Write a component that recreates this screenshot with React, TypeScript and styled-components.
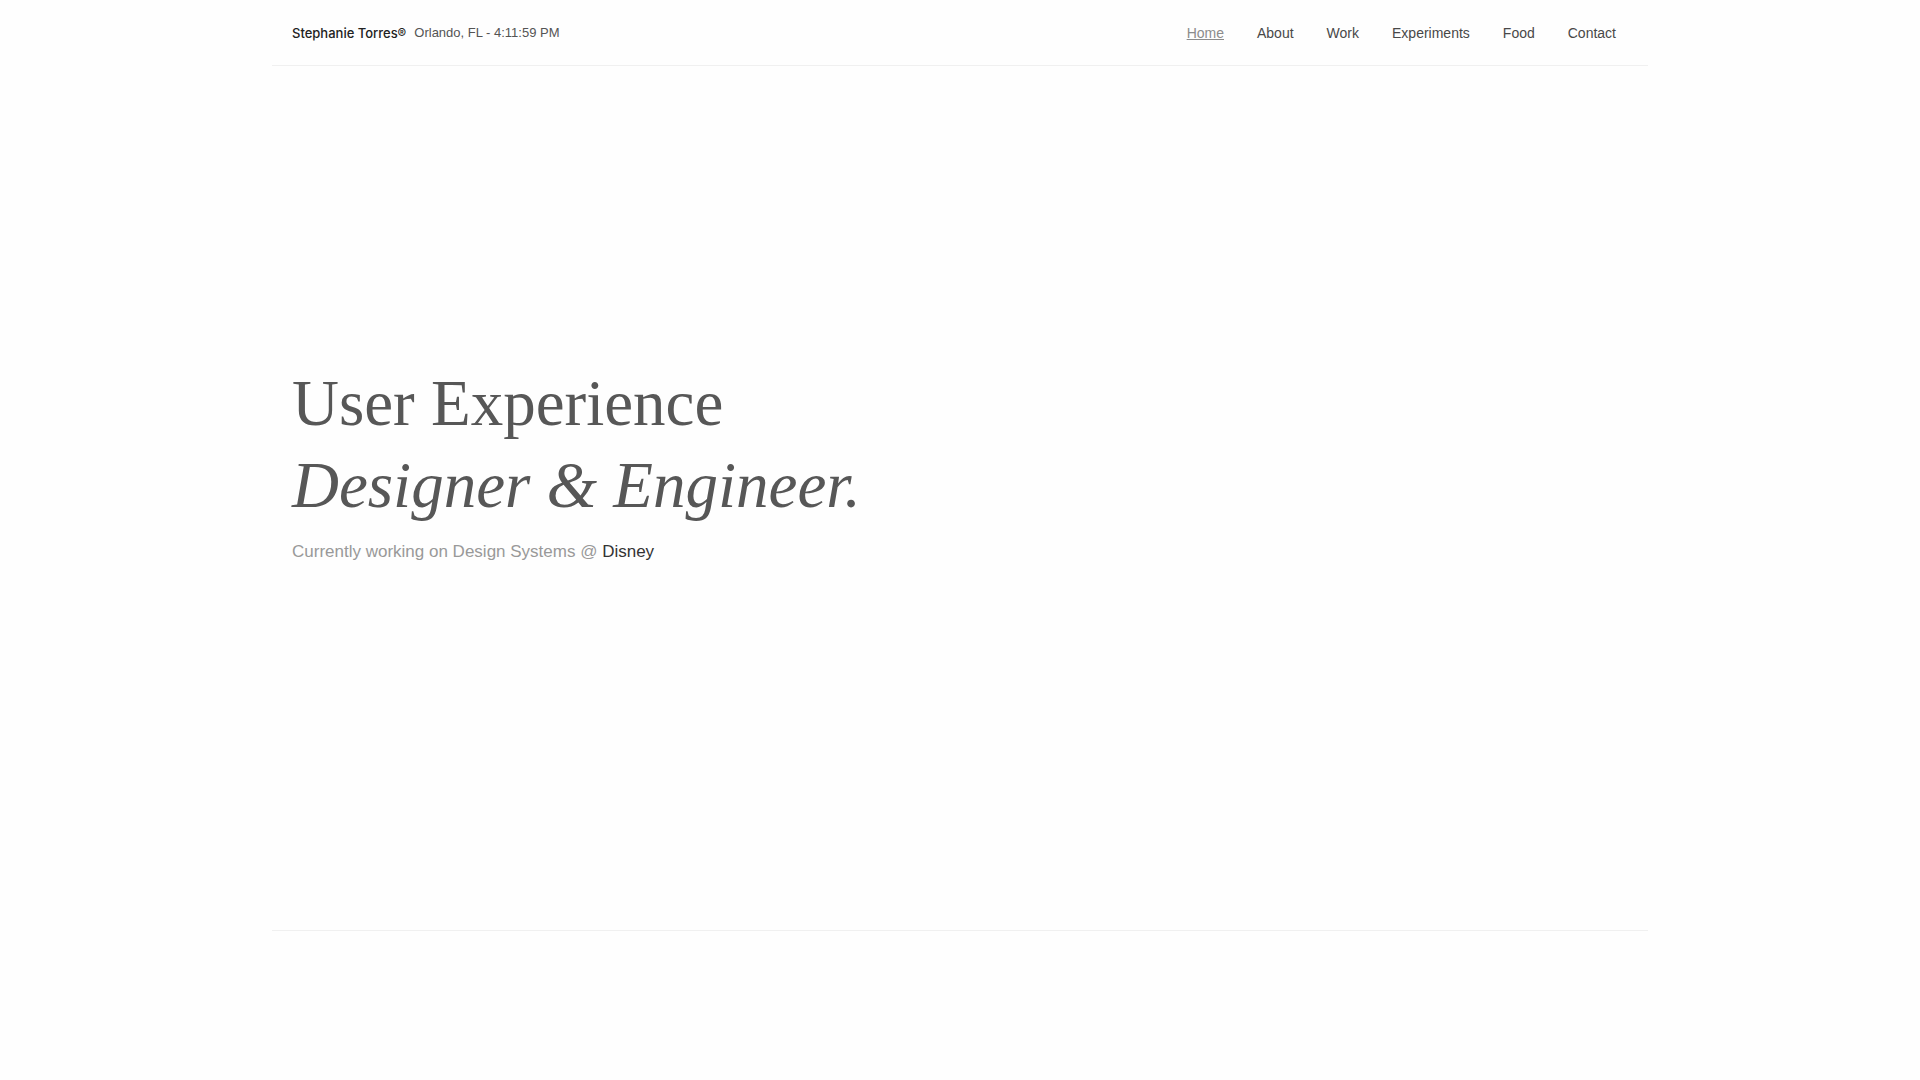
import React from "react";
import styled, { createGlobalStyle } from "styled-components";

const GlobalStyle = createGlobalStyle`
  * { box-sizing: border-box; }
  body {
    margin: 0;
    background: #fefefe;
    color: #545454;
    font-family: "Liberation Sans", Arial, sans-serif;
  }
`;

const Page = styled.div`
  width: 100%;
  max-width: 1376px;
  min-height: 100vh;
  margin: 0 auto;
`;

const Header = styled.header`
  display: flex;
  align-items: center;
  justify-content: space-between;
  padding: 23px 16px 22px 20px;
  border-bottom: 1px solid #f0f0f0;
  font-size: 14px;
  line-height: 20px;
`;

const Identity = styled.div`
  display: flex;
  gap: 8px;
  font-size: 13px;
`;

const Name = styled.a`
  font-family: Inter, "Liberation Sans", sans-serif;
  font-weight: 500;
  color: #222222;
  text-decoration: none;
`;

const Nav = styled.nav`
  display: flex;
  gap: 1px;
`;

const NavLink = styled.a<{ $current?: boolean }>`
  padding: 0 16px;
  color: ${({ $current }) => ($current ? "#8c8c8c" : "#484848")};
  text-decoration: ${({ $current }) => ($current ? "underline" : "none")};
`;

const Hero = styled.main`
  display: flex;
  flex-direction: column;
  justify-content: center;
  gap: 12px;
  height: calc(80vh + 1px);
  padding: 0 20px 68px;
  border-bottom: 1px solid #f0f0f0;
`;

const Title = styled.h1`
  margin: 0;
  font-family: "Liberation Serif", "Times New Roman", serif;
  font-size: 65px;
  font-weight: 400;
  line-height: 82px;
  color: #575757;
`;

const TitleLine = styled.span`
  display: block;
`;

const TitleEmphasis = styled.em`
  display: block;
`;

const Role = styled.p`
  margin: 0;
  font-size: 17px;
  line-height: 28px;
  color: #999999;
`;

const Company = styled.a`
  color: #333333;
  text-decoration: none;
`;

const links = ["Home", "About", "Work", "Experiments", "Food", "Contact"];

export default function App() {
  return (
    <>
      <GlobalStyle />
      <Page>
        <Header>
          <Identity>
            <Name href="#home">Stephanie Torres®</Name>
            <span>Orlando, FL - 4:11:59 PM</span>
          </Identity>
          <Nav aria-label="Main">
            {links.map((label, i) => (
              <NavLink key={label} href={`#${label.toLowerCase()}`} $current={i === 0}>
                {label}
              </NavLink>
            ))}
          </Nav>
        </Header>
        <Hero>
          <Title>
            <TitleLine>User Experience</TitleLine>
            <TitleEmphasis>Designer &amp; Engineer.</TitleEmphasis>
          </Title>
          <Role>
            Currently working on Design Systems @ <Company href="#disney">Disney</Company>
          </Role>
        </Hero>
      </Page>
    </>
  );
}
